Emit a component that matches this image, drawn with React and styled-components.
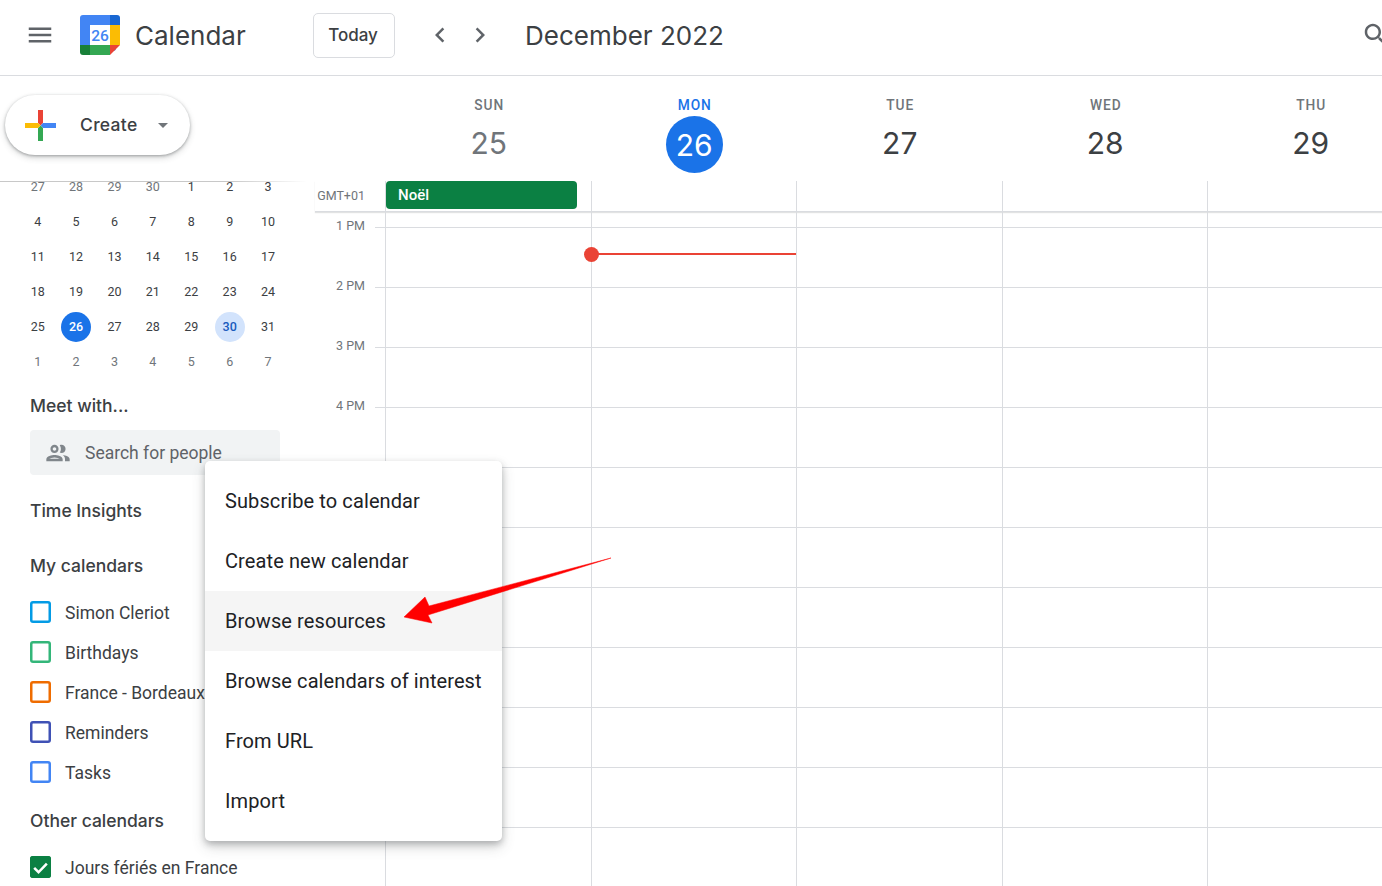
import styled, { createGlobalStyle } from "styled-components";

const GlobalStyle = createGlobalStyle`
  html, body {
    margin: 0;
    padding: 0;
    background: #fff;
    font-family: "Roboto", "Liberation Sans", sans-serif;
  }
`;

const DISPLAY_FONT = `"Inter", "Roboto", sans-serif`;

const days = [
  { name: "SUN", date: 25, past: true },
  { name: "MON", date: 26, today: true },
  { name: "TUE", date: 27 },
  { name: "WED", date: 28 },
  { name: "THU", date: 29 },
];

const miniWeeks = [
  [27, 28, 29, 30, 1, 2, 3],
  [4, 5, 6, 7, 8, 9, 10],
  [11, 12, 13, 14, 15, 16, 17],
  [18, 19, 20, 21, 22, 23, 24],
  [25, 26, 27, 28, 29, 30, 31],
  [1, 2, 3, 4, 5, 6, 7],
];

const myCalendars = [
  { name: "Simon Cleriot", color: "#039be5" },
  { name: "Birthdays", color: "#33b679" },
  { name: "France - Bordeaux", color: "#ef6c00" },
  { name: "Reminders", color: "#3f51b5" },
  { name: "Tasks", color: "#4285f4" },
];

const menuItems = [
  "Subscribe to calendar",
  "Create new calendar",
  "Browse resources",
  "Browse calendars of interest",
  "From URL",
  "Import",
];

const hours = ["1 PM", "2 PM", "3 PM", "4 PM", "", "", "", "", "", "", "", ""];

const isOtherMonth = (week, day) =>
  (week === 0 && day > 20) || (week === 5 && day < 10);

const App = () => {
  return (
    <Page>
      <GlobalStyle />
      <Header>
        <IconButton aria-label="Main menu">
          <svg width="30" height="30" viewBox="0 0 24 24" fill="#5f6368">
            <path d="M3 18h18v-2H3v2zm0-5h18v-2H3v2zm0-7v2h18V6H3z" />
          </svg>
        </IconButton>
        <Logo viewBox="0 0 40 40" width="40" height="40">
          <rect x="0" y="0" width="36" height="36" rx="3" fill="#4285f4" />
          <path d="M30 0h7a3 3 0 0 1 3 3v7H30z" fill="#1967d2" />
          <rect x="30" y="10" width="10" height="20" fill="#fbbc04" />
          <rect x="10" y="30" width="20" height="10" fill="#34a853" />
          <path d="M0 30h10v10H3a3 3 0 0 1-3-3z" fill="#188038" />
          <path d="M30 30h10L30 40z" fill="#ea4335" />
          <rect x="10" y="10" width="20" height="20" fill="#fff" />
          <text
            x="20"
            y="26"
            textAnchor="middle"
            fontSize="15.500"
            fontWeight="500"
            fontFamily="Roboto, sans-serif"
            fill="#4285f4"
          >
            26
          </text>
        </Logo>
        <Brand>Calendar</Brand>
        <TodayButton>Today</TodayButton>
        <NavIcons>
          <IconButton aria-label="Previous">
            <svg width="30" height="30" viewBox="0 0 24 24" fill="#5f6368">
              <path d="M15.41 7.41 14 6l-6 6 6 6 1.41-1.41L10.83 12z" />
            </svg>
          </IconButton>
          <IconButton aria-label="Next">
            <svg width="30" height="30" viewBox="0 0 24 24" fill="#5f6368">
              <path d="M10 6 8.59 7.41 13.17 12l-4.58 4.59L10 18l6-6z" />
            </svg>
          </IconButton>
        </NavIcons>
        <MonthTitle>December 2022</MonthTitle>
        <SearchButton aria-label="Search">
          <svg width="30" height="30" viewBox="0 0 24 24" fill="#5f6368">
            <path d="M15.5 14h-.79l-.28-.27C15.41 12.59 16 11.11 16 9.5 16 5.91 13.09 3 9.5 3S3 5.91 3 9.5 5.91 16 9.5 16c1.61 0 3.09-.59 4.23-1.57l.27.28v.79l5 4.99L20.49 19l-4.99-5zm-6 0C7.01 14 5 11.99 5 9.5S7.01 5 9.5 5 14 7.01 14 9.5 11.99 14 9.5 14z" />
          </svg>
        </SearchButton>
      </Header>

      <Body>
        <Sidebar>
          <CreateArea>
            <CreateButton>
              <PlusIcon width="31" height="31" viewBox="0 0 31 31">
                <path d="M13 0h5v13l-2.500 2.500L13 13z" fill="#ea4335" />
                <path d="M31 13v5H18l-2.500-2.500L18 13z" fill="#4285f4" />
                <path d="M18 31h-5V18l2.500-2.500L18 18z" fill="#34a853" />
                <path d="M0 18v-5h13l2.500 2.500L13 18z" fill="#fbbc04" />
              </PlusIcon>
              <CreateLabel>Create</CreateLabel>
              <Caret />
            </CreateButton>
          </CreateArea>

          <SideScroll>
            <MiniCalendar>
              {miniWeeks.map((week, w) =>
                week.map((day) => (
                  <MiniCell key={`${w}-${day}`}>
                    <MiniDay
                      $muted={isOtherMonth(w, day)}
                      $today={w === 4 && day === 26}
                      $selected={w === 4 && day === 30}
                    >
                      {day}
                    </MiniDay>
                  </MiniCell>
                ))
              )}
            </MiniCalendar>

            <SectionTitle $top={14}>Meet with...</SectionTitle>
            <PeopleSearch>
              <svg width="28" height="28" viewBox="0 0 24 24" fill="#80868b">
                <path d="M9 12c1.930 0 3.500-1.570 3.500-3.500S10.930 5 9 5 5.500 6.570 5.500 8.500 7.070 12 9 12zm0-5c.83 0 1.500.67 1.500 1.500S9.830 10 9 10s-1.500-.67-1.500-1.500S8.170 7 9 7zm0 6.750c-2.340 0-7 1.170-7 3.500V19h14v-1.750c0-2.330-4.660-3.500-7-3.500zM4.340 17c.84-.58 2.870-1.250 4.660-1.250s3.820.67 4.660 1.250H4.340zm11.700-3.190c1.160.84 1.960 1.960 1.960 3.440V19h4v-1.750c0-2.020-3.500-3.170-5.960-3.440zM15 12c1.930 0 3.500-1.570 3.500-3.500S16.930 5 15 5c-.54 0-1.040.13-1.500.35.63.89 1 1.980 1 3.150s-.37 2.260-1 3.150c.46.220.96.350 1.500.350z" />
              </svg>
              <PeoplePlaceholder>Search for people</PeoplePlaceholder>
            </PeopleSearch>

            <SectionTitle $top={23}>Time Insights</SectionTitle>
            <SectionTitle $top={30}>My calendars</SectionTitle>
            <CalendarList>
              {myCalendars.map((cal) => (
                <CalendarRow key={cal.name}>
                  <Checkbox $color={cal.color} />
                  <CalendarName>{cal.name}</CalendarName>
                </CalendarRow>
              ))}
            </CalendarList>

            <SectionTitle $top={16}>Other calendars</SectionTitle>
            <CalendarList>
              <CalendarRow>
                <Checkbox $color="#0b8043" $checked>
                  <svg width="19" height="19" viewBox="0 0 24 24" fill="none">
                    <path
                      d="M4 12.500l5.500 5.500L20 7"
                      stroke="#fff"
                      strokeWidth="3.200"
                    />
                  </svg>
                </Checkbox>
                <CalendarName>Jours fériés en France</CalendarName>
              </CalendarRow>
            </CalendarList>
          </SideScroll>
        </Sidebar>

        <Main>
          <DayHeaders>
            {days.map((d) => (
              <DayHead key={d.name}>
                <DayName $today={d.today}>{d.name}</DayName>
                <DayNumber $today={d.today} $past={d.past}>
                  {d.date}
                </DayNumber>
              </DayHead>
            ))}
          </DayHeaders>

          <AllDayRow>
            <Gutter>
              <GmtLabel>GMT+01</GmtLabel>
            </Gutter>
            {days.map((d, i) => (
              <AllDayCell key={d.name}>
                {i === 0 && <AllDayEvent>Noël</AllDayEvent>}
              </AllDayCell>
            ))}
          </AllDayRow>

          <TopSliver>
            <Gutter />
            {days.map((d) => (
              <SliverCell key={d.name} />
            ))}
          </TopSliver>

          {hours.map((label, h) => (
            <HourRow key={h}>
              <HourGutter>
                <HourLabel>{label}</HourLabel>
                <HourTick />
              </HourGutter>
              {days.map((d) => (
                <HourCell key={d.name}>
                  {h === 0 && d.today && (
                    <NowLine>
                      <NowDot />
                    </NowLine>
                  )}
                </HourCell>
              ))}
            </HourRow>
          ))}
        </Main>
      </Body>

      <CreateMenu>
        {menuItems.map((item) => (
          <MenuItem key={item} $active={item === "Browse resources"}>
            {item}
          </MenuItem>
        ))}
      </CreateMenu>

      <Arrow viewBox="0 0 1382 886" width="1382" height="886">
        <polygon
          points="611,558 429,606 425,597 404,617 432,623 428,615"
          fill="#ff0000"
          stroke="#ff0000"
          strokeWidth="0.500"
        />
      </Arrow>
    </Page>
  );
};

const Page = styled.div`
  position: relative;
  width: 1382px;
  height: 886px;
  overflow: hidden;
  background: #fff;
  color: #3c4043;
`;

const Header = styled.header`
  display: flex;
  align-items: center;
  height: 70px;
  padding: 0 0 5px 25px;
  border-bottom: 1px solid #dadce0;
`;

const IconButton = styled.div`
  display: flex;
  width: 30px;
  height: 30px;
`;

const Logo = styled.svg`
  margin-left: 25px;
  flex: none;
`;

const Brand = styled.div`
  margin-left: 15px;
  width: 178px;
  font-family: ${DISPLAY_FONT};
  font-size: 26px;
  color: #3c4043;
`;

const TodayButton = styled.div`
  display: flex;
  align-items: center;
  justify-content: center;
  box-sizing: border-box;
  width: 82px;
  height: 45px;
  padding-right: 2px;
  border: 1px solid #dadce0;
  border-radius: 5px;
  font-family: ${DISPLAY_FONT};
  font-size: 17px;
  font-weight: 500;
  color: #3c4043;
`;

const NavIcons = styled.div`
  display: flex;
  gap: 10px;
  margin-left: 30px;
`;

const MonthTitle = styled.div`
  margin-left: 30px;
  font-family: ${DISPLAY_FONT};
  font-size: 26px;
  color: #3c4043;
`;

const SearchButton = styled(IconButton)`
  margin-left: auto;
  margin-right: -9px;
`;

const Body = styled.div`
  display: flex;
  height: 810px;
`;

const Sidebar = styled.aside`
  flex: 0 0 306px;
  display: flex;
  flex-direction: column;
  overflow: hidden;
`;

const CreateArea = styled.div`
  flex: 0 0 105px;
  box-sizing: border-box;
  padding: 19px 0 0 5px;
`;

const CreateButton = styled.div`
  display: flex;
  align-items: center;
  box-sizing: border-box;
  width: 185px;
  height: 60px;
  padding: 0 0 2px 20px;
  border-radius: 30px;
  background: #fff;
  box-shadow: 0 1px 3px rgba(60, 64, 67, 0.4), 0 3px 6px rgba(60, 64, 67, 0.2);
`;

const PlusIcon = styled.svg`
  flex: none;
  margin-top: 2px;
`;

const CreateLabel = styled.span`
  margin-left: 24px;
  font-family: ${DISPLAY_FONT};
  font-size: 17.5px;
  font-weight: 500;
  letter-spacing: 0.3px;
  color: #3c4043;
`;

const Caret = styled.span`
  margin: 2px 0 0 20px;
  width: 0;
  height: 0;
  border-left: 5px solid transparent;
  border-right: 5px solid transparent;
  border-top: 5px solid #70757a;
`;

const SideScroll = styled.div`
  flex: 1;
  overflow: hidden;
  border-top: 1px solid transparent;
  border-image: linear-gradient(to right, #c8c8c8 75%, transparent) 1;
`;

const MiniCalendar = styled.div`
  display: grid;
  grid-template-columns: repeat(7, 38.4px);
  grid-auto-rows: 35px;
  margin: -13px 0 0 18.5px;
`;

const MiniCell = styled.div`
  display: flex;
  align-items: center;
  justify-content: center;
`;

const MiniDay = styled.span`
  display: flex;
  align-items: center;
  justify-content: center;
  width: 30px;
  height: 30px;
  border-radius: 50%;
  font-size: 12.5px;
  font-weight: ${(p) => (p.$today || p.$selected ? 500 : 400)};
  color: ${(p) =>
    p.$today ? "#fff" : p.$selected ? "#185abc" : p.$muted ? "#70757a" : "#3c4043"};
  background: ${(p) =>
    p.$today ? "#1a73e8" : p.$selected ? "#d2e3fc" : "transparent"};
`;

const SectionTitle = styled.div`
  margin: ${(p) => p.$top}px 0 0 30px;
  height: 25px;
  line-height: 25px;
  font-family: ${DISPLAY_FONT};
  font-size: 17.5px;
  font-weight: 500;
  color: #3c4043;
`;

const PeopleSearch = styled.div`
  display: flex;
  align-items: center;
  box-sizing: border-box;
  width: 250px;
  height: 45px;
  margin: 12px 0 0 30px;
  padding-left: 14px;
  border-radius: 4px;
  background: #f1f3f4;
`;

const PeoplePlaceholder = styled.span`
  margin-left: 13px;
  font-size: 17.5px;
  color: #5f6368;
`;

const CalendarList = styled.div`
  margin: 14px 0 0 30px;
`;

const CalendarRow = styled.div`
  display: flex;
  align-items: center;
  height: 40px;
`;

const Checkbox = styled.span`
  display: flex;
  align-items: center;
  justify-content: center;
  box-sizing: border-box;
  width: 21px;
  height: 22px;
  border-radius: 3px;
  box-shadow: inset 0 0 0 2.5px ${(p) => p.$color};
  background: ${(p) => (p.$checked ? p.$color : "transparent")};
`;

const CalendarName = styled.span`
  margin-left: 14px;
  padding-top: 2px;
  font-size: 17.5px;
  color: #3c4043;
  white-space: nowrap;
`;

const Main = styled.main`
  flex: 1;
  min-width: 0;
  overflow: hidden;
`;

const DayHeaders = styled.div`
  display: flex;
  height: 105px;
  padding-left: 80px;
`;

const DayHead = styled.div`
  flex: 0 0 205.5px;
  display: flex;
  flex-direction: column;
  align-items: center;
  padding-top: 20px;
  box-sizing: border-box;
`;

const DayName = styled.div`
  height: 20px;
  line-height: 18px;
  padding-left: 1px;
  font-size: 13.75px;
  font-weight: 500;
  letter-spacing: 0.9px;
  color: ${(p) => (p.$today ? "#1a73e8" : "#70757a")};
`;

const DayNumber = styled.div`
  display: flex;
  align-items: center;
  justify-content: center;
  width: 57px;
  height: 57px;
  border-radius: 50%;
  margin-top: ${(p) => (p.$today ? 0 : -2)}px;
  font-family: ${DISPLAY_FONT};
  font-size: 30px;
  color: ${(p) => (p.$today ? "#fff" : p.$past ? "#70757a" : "#3c4043")};
  background: ${(p) => (p.$today ? "#1a73e8" : "transparent")};
`;

const Gutter = styled.div`
  flex: 0 0 79px;
`;

const AllDayRow = styled.div`
  display: flex;
  height: 31px;
  box-sizing: border-box;
  border-bottom: 1px solid #dadce0;
  box-shadow: 0 1px 1px rgba(60, 64, 67, 0.15);
  margin-left: 9px;
  & > ${Gutter} {
    flex-basis: 70px;
  }
`;

const GmtLabel = styled.div`
  width: 50px;
  margin-top: 7px;
  text-align: right;
  font-size: 12.5px;
  color: #70757a;
`;

const AllDayCell = styled.div`
  flex: 0 0 205.5px;
  box-sizing: border-box;
  border-left: 1px solid #dadce0;
`;

const AllDayEvent = styled.div`
  display: flex;
  align-items: center;
  box-sizing: border-box;
  width: 191px;
  height: 28px;
  padding-left: 12px;
  border-radius: 4px;
  background: #0b8043;
  color: #fff;
  font-size: 15px;
  font-weight: 500;
`;

const TopSliver = styled.div`
  display: flex;
  height: 15px;
`;

const SliverCell = styled.div`
  flex: 0 0 205.5px;
  box-sizing: border-box;
  border-left: 1px solid #dadce0;
`;

const HourRow = styled.div`
  display: flex;
  height: 60px;
`;

const HourGutter = styled.div`
  flex: 0 0 79px;
  display: flex;
`;

const HourLabel = styled.div`
  flex: 0 0 59px;
  margin-top: -10px;
  height: 18px;
  line-height: 18px;
  text-align: right;
  font-size: 12.5px;
  color: #70757a;
`;

const HourTick = styled.div`
  flex: 0 0 10px;
  margin-left: 10px;
  border-top: 1px solid #dadce0;
`;

const HourCell = styled.div`
  position: relative;
  flex: 0 0 205.5px;
  box-sizing: border-box;
  border-left: 1px solid #dadce0;
  border-top: 1px solid #dadce0;
`;

const NowLine = styled.div`
  position: absolute;
  top: 25px;
  left: -1px;
  right: 0;
  height: 2px;
  background: #ea4335;
`;

const NowDot = styled.div`
  position: absolute;
  top: -6.500px;
  left: -7px;
  width: 15px;
  height: 15px;
  border-radius: 50%;
  background: #ea4335;
`;

const CreateMenu = styled.div`
  position: absolute;
  top: 461px;
  left: 205px;
  width: 297px;
  padding: 10px 0;
  border-radius: 5px;
  background: #fff;
  box-shadow: 0 3px 6px rgba(60, 64, 67, 0.3), 0 6px 14px rgba(60, 64, 67, 0.2);
`;

const MenuItem = styled.div`
  display: flex;
  align-items: center;
  height: 60px;
  padding-left: 20px;
  font-size: 20px;
  letter-spacing: 0.1px;
  color: #202124;
  white-space: nowrap;
  background: ${(p) => (p.$active ? "#f5f5f5" : "transparent")};
`;

const Arrow = styled.svg`
  position: absolute;
  top: 0;
  left: 0;
  pointer-events: none;
`;

export default App;
